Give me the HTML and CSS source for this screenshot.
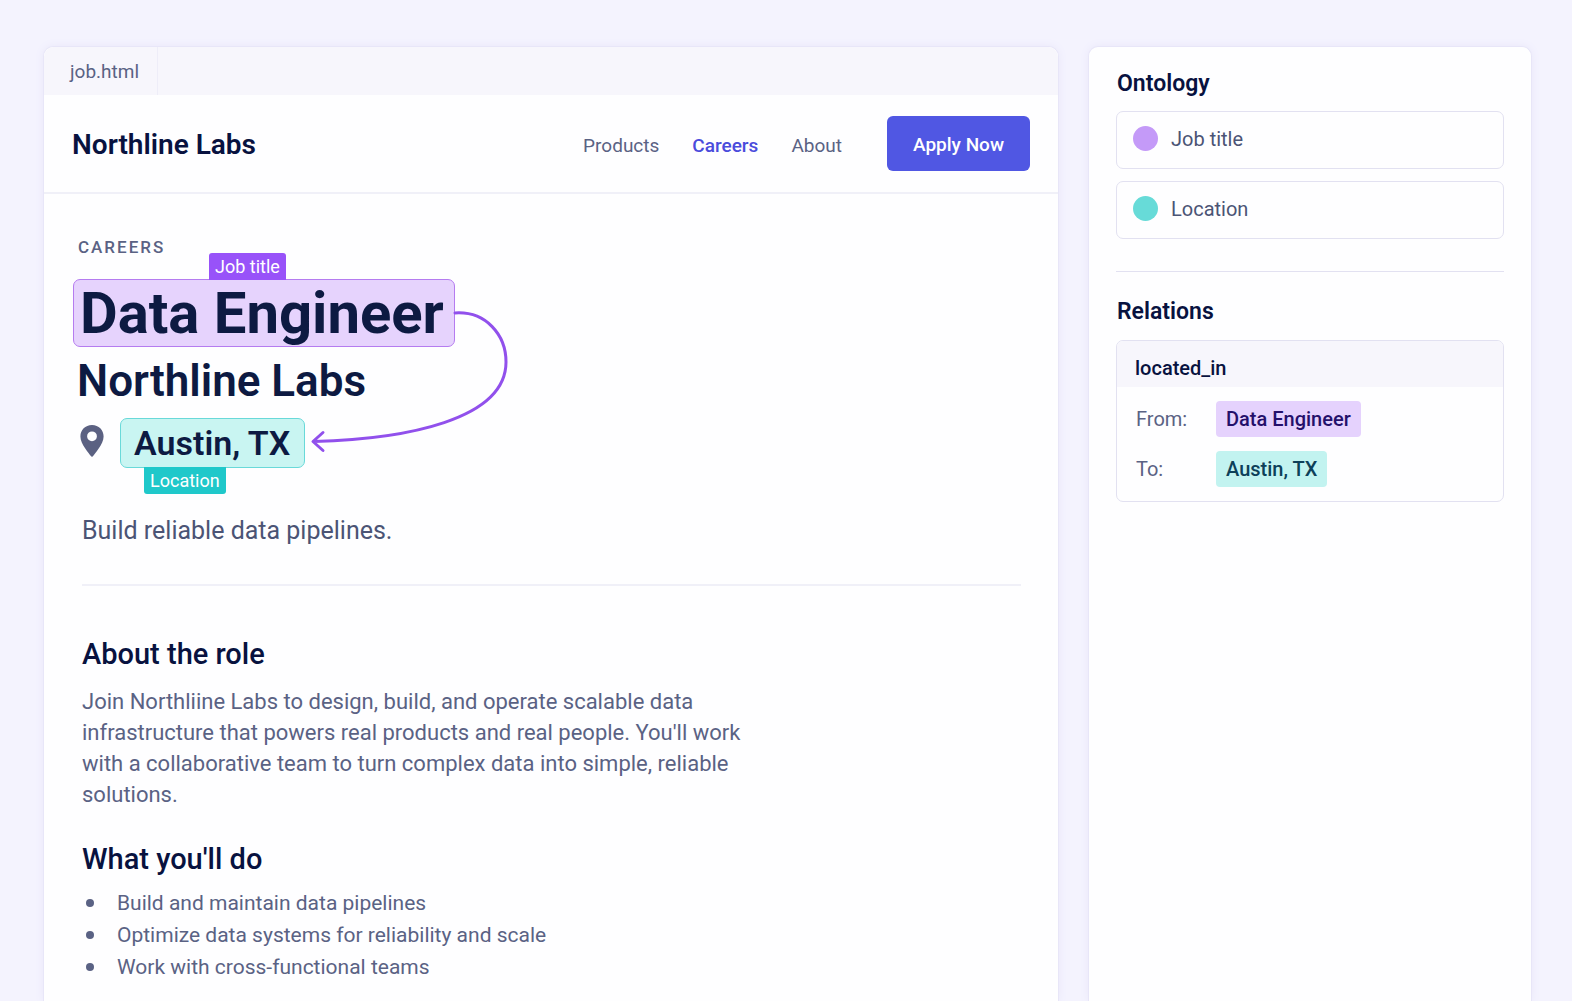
FILE: index.html
```html
<!DOCTYPE html>
<html lang="en">
<head>
<meta charset="utf-8">
<meta name="viewport" content="width=device-width, initial-scale=1">
<title>job.html</title>
<link rel="stylesheet" href="styles.css">
</head>
<body>
<div class="workspace">
  <main class="document">
    <div class="tabs"><span class="tab">job.html</span></div>
    <header class="site-header">
      <span class="brand">Northline Labs</span>
      <nav class="nav">
        <a href="#">Products</a>
        <a href="#" class="active">Careers</a>
        <a href="#">About</a>
      </nav>
      <button class="apply" type="button">Apply Now</button>
    </header>
    <section class="hero">
      <p class="eyebrow">Careers</p>
      <h1 class="mark mark-title">Data Engineer<span class="tag tag-title">Job title</span></h1>
      <p class="company">Northline Labs</p>
      <div class="place">
        <svg class="pin" viewBox="0 0 24 32" aria-hidden="true"><path fill-rule="evenodd" d="M12 0C5.2 0 .4 5 .4 11.400C.4 19 9.400 28.800 11.200 31.300Q12 32.300 12.800 31.300C14.600 28.800 23.600 19 23.600 11.400C23.600 5 18.800 0 12 0ZM12 6.400A4.900 4.900 0 1 1 12 16.200A4.900 4.900 0 1 1 12 6.400Z"/></svg>
        <span class="mark mark-place">Austin, TX<span class="tag tag-place">Location</span></span>
      </div>
      <svg class="relation-arrow" viewBox="0 0 200 140" aria-hidden="true"><path d="M145 6C176 4 196 28 196 55C196 113 95 132 4 134.500M13 125.500L3 134.500L13 143.500"/></svg>
      <p class="summary">Build reliable data pipelines.</p>
    </section>
    <article class="details">
      <h2>About the role</h2>
      <p class="about">Join Northliine Labs to design, build, and operate scalable data infrastructure that powers real products and real people. You'll work with a collaborative team to turn complex data into simple, reliable solutions.</p>
      <h2>What you'll do</h2>
      <ul class="duties">
        <li>Build and maintain data pipelines</li>
        <li>Optimize data systems for reliability and scale</li>
        <li>Work with cross-functional teams</li>
      </ul>
    </article>
  </main>
  <aside class="panel">
    <h2>Ontology</h2>
    <ul class="types">
      <li><span class="dot dot-title"></span>Job title</li>
      <li><span class="dot dot-place"></span>Location</li>
    </ul>
    <hr>
    <h2>Relations</h2>
    <section class="relation">
      <h3>located_in</h3>
      <dl>
        <dt>From:</dt><dd><span class="chip chip-title">Data Engineer</span></dd>
        <dt>To:</dt><dd><span class="chip chip-place">Austin, TX</span></dd>
      </dl>
    </section>
  </aside>
</div>
</body>
</html>
```

FILE: styles.css
```css
:root {
  --ink: #08123f;
  --heading: #0d1a42;
  --text: #5a6284;
  --line: #e2e1f1;
  --soft: #f7f6fc;
}

* { box-sizing: border-box; }

body {
  margin: 0;
  background: #f4f3fe;
  color: var(--text);
  font-family: Roboto, "Liberation Sans", sans-serif;
  font-size: 19px;
}

h1, h2, h3, p, ul, dl, dd { margin: 0; padding: 0; }
ul { list-style: none; }

.workspace {
  display: grid;
  grid-template-columns: minmax(0, 1fr) 444px;
  gap: 29px;
  min-height: 100vh;
  padding: 46px 40px 0 43px;
}

.document, .panel {
  background: #fefeff;
  border: 1px solid #e8e6f8;
  border-bottom: 0;
  border-radius: 10px 10px 0 0;
  box-shadow: 0 0 8px #e9e7fa;
}

/* Page preview */
.tabs {
  display: flex;
  height: 48px;
  background: var(--soft);
  border-radius: 10px 10px 0 0;
}
.tab {
  padding: 0 18px 0 26px;
  border-right: 1px solid #eeedf8;
  line-height: 49px;
}

.site-header {
  display: flex;
  align-items: center;
  height: 99px;
  padding: 0 28px;
  border-bottom: 2px solid #f0f0f8;
}
.brand {
  flex: 1;
  padding-top: 2px;
  color: var(--ink);
  font-size: 28px;
  font-weight: 600;
}
.nav { display: flex; gap: 33px; padding-top: 4px; }
.nav a { color: var(--text); text-decoration: none; }
.nav .active { color: #4a4bdc; font-weight: 500; }
.apply {
  height: 55px;
  margin-left: 45px;
  padding: 2px 26px 0;
  border: 0;
  border-radius: 6px;
  background: #5057e3;
  color: #fff;
  font: 500 19px Roboto, "Liberation Sans", sans-serif;
}

.hero {
  position: relative;
  margin: 0 37px 0 38px;
  padding: 43px 0 37px;
  border-bottom: 2px solid #f0f0f8;
}
.eyebrow {
  margin-left: -4px;
  font-size: 17px;
  font-weight: 500;
  line-height: 20px;
  letter-spacing: 2px;
  text-transform: uppercase;
}
.mark {
  position: relative;
  display: block;
  width: fit-content;
  border: 1px solid;
  color: var(--heading);
}
.mark-title {
  margin: 22px 0 0 -9px;
  padding: 0 10px 0 6px;
  border-color: #b57cf0;
  border-radius: 7px;
  background: #e6d3fd;
  font-size: 58px;
  font-weight: 700;
  line-height: 66px;
}
.tag {
  position: absolute;
  padding: 0 6px;
  color: #fff;
  font-size: 18px;
  font-weight: 400;
  line-height: 27px;
}
.tag-title {
  bottom: 100%;
  left: 135px;
  border-radius: 3px 3px 0 0;
  background: #9852f9;
}
.tag-place {
  top: 100%;
  left: 23px;
  border-radius: 0 0 3px 3px;
  background: #1fc8ca;
}
.company {
  margin: 8px 0 0 -5px;
  color: var(--heading);
  font-size: 44px;
  font-weight: 600;
  line-height: 52px;
}
.place {
  display: flex;
  align-items: center;
  gap: 16px;
  margin: 11px 0 0 -2px;
}
.pin { width: 24px; height: 32px; margin-bottom: 4px; fill: #5b6182; }
.mark-place {
  padding: 0 14px 0 13px;
  border-color: #69d9d9;
  border-radius: 7px;
  background: #c9f5f2;
  font-size: 34px;
  font-weight: 600;
  line-height: 48px;
}
.relation-arrow {
  position: absolute;
  top: 113px;
  left: 228px;
  width: 200px;
  height: 140px;
  overflow: visible;
  fill: none;
  stroke: #9150ec;
  stroke-width: 3;
  stroke-linecap: round;
  stroke-linejoin: round;
}
.summary {
  margin-top: 47px;
  color: #4b5475;
  font-size: 25px;
  line-height: 32px;
}

.details { padding: 50px 38px 16px; }
.details h2 {
  color: var(--ink);
  font-size: 29px;
  font-weight: 500;
  line-height: 36px;
}
.about {
  max-width: 670px;
  margin: 14px 0 31px;
  font-size: 22px;
  line-height: 31px;
}
.duties { margin-top: 10px; font-size: 21px; line-height: 32px; }
.duties li { display: flex; align-items: center; gap: 23px; }
.duties li::before {
  content: "";
  width: 8px;
  height: 8px;
  margin-left: 4px;
  border-radius: 50%;
  background: var(--text);
}

/* Annotation panel */
.panel { padding: 22px 27px; font-size: 20px; }
.panel h2 {
  padding-left: 1px;
  color: var(--ink);
  font-size: 23px;
  font-weight: 600;
  line-height: 30px;
}
.types { display: grid; gap: 12px; margin-top: 12px; }
.types li {
  display: flex;
  align-items: center;
  gap: 13px;
  height: 58px;
  padding: 0 16px 3px;
  border: 1px solid var(--line);
  border-radius: 7px;
  color: #4b5475;
}
.dot { width: 25px; height: 25px; border-radius: 50%; }
.dot-title { background: #c49af8; }
.dot-place { background: #67dbd8; }
.panel hr {
  height: 1px;
  margin: 32px 0 25px;
  border: 0;
  background: var(--line);
}
.relation {
  margin-top: 13px;
  border: 1px solid var(--line);
  border-radius: 7px;
  overflow: hidden;
}
.relation h3 {
  height: 46px;
  padding: 4px 18px 0;
  background: var(--soft);
  color: var(--ink);
  font-size: 20px;
  font-weight: 500;
  line-height: 46px;
}
.relation dl {
  display: grid;
  grid-template-columns: 80px 1fr;
  row-gap: 14px;
  padding: 14px 19px;
  line-height: 36px;
}
.chip {
  display: inline-block;
  padding: 0 10px;
  border-radius: 4px;
  vertical-align: top;
}
.chip-title { background: #e5d2fd; color: #24106b; font-weight: 500; }
.chip-place { background: #c2f3f0; color: #0d4059; font-weight: 500; }
```
